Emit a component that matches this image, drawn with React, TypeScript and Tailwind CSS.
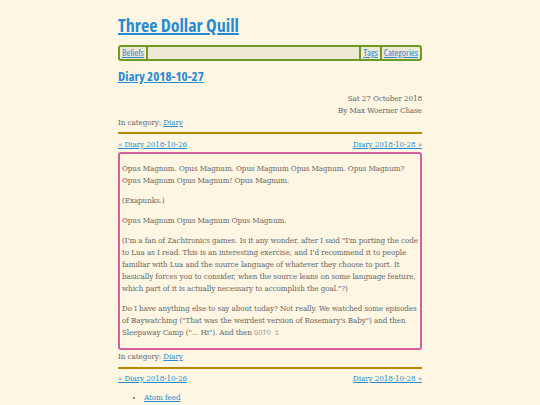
const sans = "font-['Open_Sans','Lato',sans-serif]";
const serif = "font-['DejaVu_Serif','Liberation_Serif',serif] font-stretch-condensed";

function PrevNext() {
  return (
    <div className="flex justify-between text-[8px] leading-[12px]">
      <a href="#" className="text-[#268bd2] underline">« Diary 2018-10-26</a>
      <a href="#" className="text-[#268bd2] underline">Diary 2018-10-28 »</a>
    </div>
  );
}

export default function App() {
  return (
    <div className={`min-h-screen bg-[#fdf6e3] text-[#666666] ${serif} tracking-[-0.005em]`}>
      <div className="mx-auto w-[304px] pt-[15px]">
        <h1 className={`${sans} font-stretch-semi-condensed text-[18px] font-bold leading-[20px] tracking-normal`}>
          <a href="#" className="text-[#268bd2] underline decoration-2">Three Dollar Quill</a>
        </h1>

        <nav className={`${sans} font-stretch-semi-condensed mt-[10px] flex h-[16px] items-center rounded-[3px] border-2 border-[#6d9a22] bg-[#eee8d5] px-[1px] text-[9.5px] leading-[12px] tracking-normal`}>
          <a href="#" className="border-r-2 border-[#6d9a22] pl-[1px] pr-[2px] text-[#268bd2] underline">Beliefs</a>
          <div className="flex-1" />
          <a href="#" className="border-l-2 border-[#6d9a22] px-[2px] text-[#268bd2] underline">Tags</a>
          <a href="#" className="border-l-2 border-[#6d9a22] pl-[2px] pr-[1px] text-[#268bd2] underline">Categories</a>
        </nav>

        <h2 className={`${sans} font-stretch-semi-condensed mt-[7px] text-[13px] font-bold leading-[16px] tracking-normal`}>
          <a href="#" className="text-[#268bd2] underline">Diary 2018-10-27</a>
        </h2>

        <div className="mt-[9px] text-right text-[8px] leading-[12px]">
          <div>Sat 27 October 2018</div>
          <div>By Max Woerner Chase</div>
        </div>
        <div className="text-[8px] leading-[12px]">
          In category: <a href="#" className="text-[#268bd2] underline">Diary</a>
        </div>

        <div className="mt-[3px] h-[2px] bg-[#b58900]" />
        <div className="mt-[5px]">
          <PrevNext />
        </div>

        <article className="mt-[1px] flex flex-col gap-[8px] rounded-[3px] border-2 border-[#d3609a] px-[2px] py-[9px] text-[8px] leading-[12px]">
          <p>Opus Magnum. Opus Magnum. Opus Magnum Opus Magnum. Opus Magnum? Opus Magnum Opus Magnum! Opus Magnum.</p>
          <p>(Exapunks.)</p>
          <p>Opus Magnum Opus Magnum Opus Magnum.</p>
          <p>
            (I'm a fan of Zachtronics games. Is it any wonder, after I said "I'm porting the code to Lua as I read. This is an interesting exercise, and I'd recommend it to people familiar with Lua and the source language of whatever they choose to port. It basically forces you to consider, when the source leans on some language feature, which part of it is actually necessary to accomplish the goal."?)
          </p>
          <p>
            Do I have anything else to say about today? Not really. We watched some episodes of Baywatching ("That was the weirdest version of Rosemary's Baby") and then Sleepaway Camp ("... Hi"). And then{" "}
            <code className="font-['Liberation_Mono',monospace] text-[7px] leading-[12px] text-[#999999]">GOTO 1</code>
          </p>
        </article>

        <div className="mt-[1px] text-[8px] leading-[12px]">
          In category: <a href="#" className="text-[#268bd2] underline">Diary</a>
        </div>
        <div className="mt-[4px] h-[2px] bg-[#b58900]" />
        <div className="mt-[4px]">
          <PrevNext />
        </div>

        <ul className="mt-[7px] list-disc pl-[26px] text-[8px] leading-[12px] marker:text-[#666666]">
          <li>
            <a href="#" className="text-[#268bd2] underline">Atom feed</a>
          </li>
        </ul>
      </div>
    </div>
  );
}
